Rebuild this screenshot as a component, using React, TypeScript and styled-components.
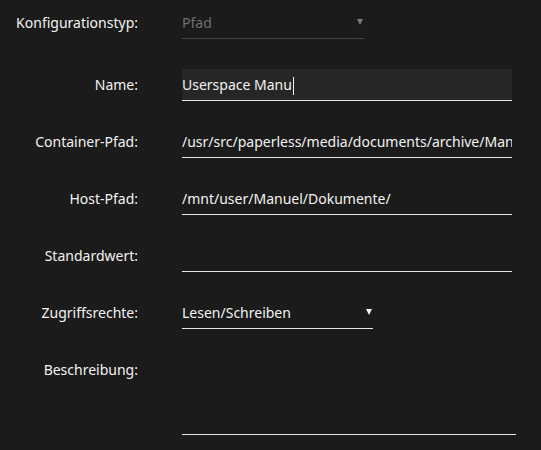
import styled, { createGlobalStyle } from 'styled-components'

const GlobalStyle = createGlobalStyle`
  html, body {
    margin: 0;
    padding: 0;
    background: #1c1b1b;
  }
  body {
    font-family: 'Noto Sans', 'Open Sans', sans-serif;
    font-size: 14px;
    color: #f2f2f2;
  }
`

const Form = styled.div`
  display: flex;
  flex-direction: column;
  padding: 7px 0 0 0;
  width: 541px;
  height: 450px;
  box-sizing: border-box;
  overflow: hidden;
`

const Row = styled.div<{ $gap?: number }>`
  display: grid;
  grid-template-columns: 138px 1fr;
  column-gap: 44px;
  align-items: start;
  margin-bottom: ${(p) => p.$gap ?? 25}px;
`

const Label = styled.div`
  text-align: right;
  line-height: 31px;
  white-space: nowrap;
`

const Field = styled.div<{ $width: number; $focus?: boolean }>`
  width: ${(p) => p.$width}px;
  height: 31px;
  line-height: 31px;
  border-bottom: 1px solid #e6e6e6;
  background: ${(p) => (p.$focus ? '#262626' : 'transparent')};
  white-space: nowrap;
  overflow: hidden;
`

const Select = styled.div<{ $width: number; $disabled?: boolean }>`
  display: flex;
  align-items: center;
  justify-content: space-between;
  width: ${(p) => p.$width}px;
  height: 31px;
  border-bottom: 1px solid ${(p) => (p.$disabled ? '#454545' : '#e6e6e6')};
  color: ${(p) => (p.$disabled ? '#6e6e6e' : '#f2f2f2')};
`

const Arrow = styled.span<{ $disabled?: boolean }>`
  width: 0;
  height: 0;
  margin-right: 1px;
  margin-top: -2px;
  border-left: 3px solid transparent;
  border-right: 3px solid transparent;
  border-top: 6px solid ${(p) => (p.$disabled ? '#7a7a7a' : '#f2f2f2')};
`

const Caret = styled.span`
  display: inline-block;
  width: 1px;
  height: 18px;
  background: #f2f2f2;
  vertical-align: middle;
  margin-left: 1px;
`

const TextArea = styled.div`
  width: 334px;
  height: 80px;
  border-bottom: 1px solid #e6e6e6;
`

export default function App() {
  return (
    <>
      <GlobalStyle />
      <Form>
        <Row $gap={30}>
          <Label>Konfigurationstyp:</Label>
          <Select $width={182} $disabled>
            <span>Pfad</span>
            <Arrow $disabled />
          </Select>
        </Row>
        <Row>
          <Label>Name:</Label>
          <Field $width={330} $focus>
            Userspace Manu
            <Caret />
          </Field>
        </Row>
        <Row>
          <Label>Container-Pfad:</Label>
          <Field $width={330}>/usr/src/paperless/media/documents/archive/Manuel/</Field>
        </Row>
        <Row>
          <Label>Host-Pfad:</Label>
          <Field $width={330}>/mnt/user/Manuel/Dokumente/</Field>
        </Row>
        <Row>
          <Label>Standardwert:</Label>
          <Field $width={330} />
        </Row>
        <Row>
          <Label>Zugriffsrechte:</Label>
          <Select $width={191}>
            <span>Lesen/Schreiben</span>
            <Arrow />
          </Select>
        </Row>
        <Row>
          <Label>Beschreibung:</Label>
          <TextArea />
        </Row>
      </Form>
    </>
  )
}
